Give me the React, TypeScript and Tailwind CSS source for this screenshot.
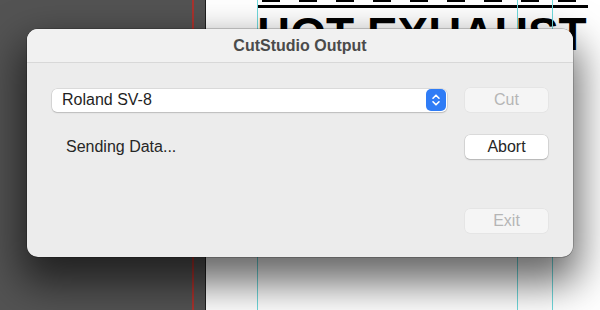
import React from "react";

const sys = { fontFamily: '"Liberation Sans", Arial, sans-serif' };

function Stepper() {
  return (
    <div className="flex h-[22px] w-[20px] items-center justify-center rounded-[5px] bg-[#2f7cf6]">
      <svg width="10" height="14" viewBox="0 0 10 14" fill="none">
        <path d="M2 5.2 L5 2.2 L8 5.2" stroke="white" strokeWidth="1.6" strokeLinecap="round" strokeLinejoin="round" />
        <path d="M2 8.8 L5 11.8 L8 8.8" stroke="white" strokeWidth="1.6" strokeLinecap="round" strokeLinejoin="round" />
      </svg>
    </div>
  );
}

function Btn({ label, disabled }: { label: string; disabled?: boolean }) {
  return (
    <div
      className={
        disabled
          ? "flex h-[24px] w-[83px] items-center justify-center rounded-[5px] bg-[#f5f5f5] text-[16px] text-[#b5b5b5] shadow-[0_0_0_0.5px_rgba(0,0,0,0.06)]"
          : "flex h-[24px] w-[83px] items-center justify-center rounded-[5px] bg-white text-[16px] text-[#262626] shadow-[0_0_0_0.5px_rgba(0,0,0,0.14),0_1px_1.5px_rgba(0,0,0,0.18)]"
      }
    >
      {label}
    </div>
  );
}

export default function App() {
  return (
    <div className="relative h-[310px] w-[600px] overflow-hidden bg-[#535353]" style={sys}>
      {/* Canvas background */}
      <div className="absolute left-[192px] top-0 h-full w-[2px] bg-[#a8332e]" />
      <div className="absolute left-[205px] top-0 h-full w-[1px] bg-[#1e1e1e]" />
      <div className="absolute left-[206px] top-0 h-full w-[394px] bg-white" />
      <div className="absolute left-[258px] top-[5px] h-[3px] w-[330px] bg-black" />
      <div className="absolute left-[262px] top-0 h-[2px] w-[326px] bg-[repeating-linear-gradient(90deg,#000_0_18px,transparent_18px_37px)]" />
      <div className="absolute left-[257px] top-[11px] whitespace-nowrap text-[46px] font-bold leading-none text-black">
        HOT EXHAUST
      </div>
      <div className="absolute left-[257px] top-0 h-full w-[1px] bg-[#6fd9dc]" />
      <div className="absolute left-[517px] top-0 h-full w-[1px] bg-[#6fd9dc]" />
      <div className="absolute left-[552px] top-0 h-full w-[1px] bg-[#6fd9dc]" />

      {/* Dialog */}
      <div className="absolute left-[27px] top-[29px] flex h-[228px] w-[546px] flex-col overflow-hidden rounded-[11px] bg-[#ececec] shadow-[0_0_0_0.5px_rgba(0,0,0,0.35),0_20px_40px_6px_rgba(0,0,0,0.6)]">
        <div className="flex h-[34px] shrink-0 items-center justify-center border-b border-[#d8d8d8] bg-[#f1f1f1] text-[16px] font-bold text-[#4b4b4b]">
          CutStudio Output
        </div>
        <div className="flex flex-1 flex-col px-[25px] pt-[25px]">
          <div className="flex h-[24px] items-center gap-[18px]">
            <div className="flex h-[23px] flex-1 items-center justify-between rounded-[5px] bg-white pl-[10px] pr-[1px] shadow-[0_0_0_0.5px_rgba(0,0,0,0.14),0_1px_1.5px_rgba(0,0,0,0.15)]">
              <span className="text-[16px] text-[#1f1f1f]">Roland SV-8</span>
              <Stepper />
            </div>
            <Btn label="Cut" disabled />
          </div>
          <div className="mt-[23px] flex h-[24px] items-center justify-between pl-[14px]">
            <span className="text-[16px] text-[#262626]">Sending Data...</span>
            <Btn label="Abort" />
          </div>
          <div className="mt-[50px] flex h-[24px] items-center justify-end">
            <Btn label="Exit" disabled />
          </div>
        </div>
      </div>
    </div>
  );
}
